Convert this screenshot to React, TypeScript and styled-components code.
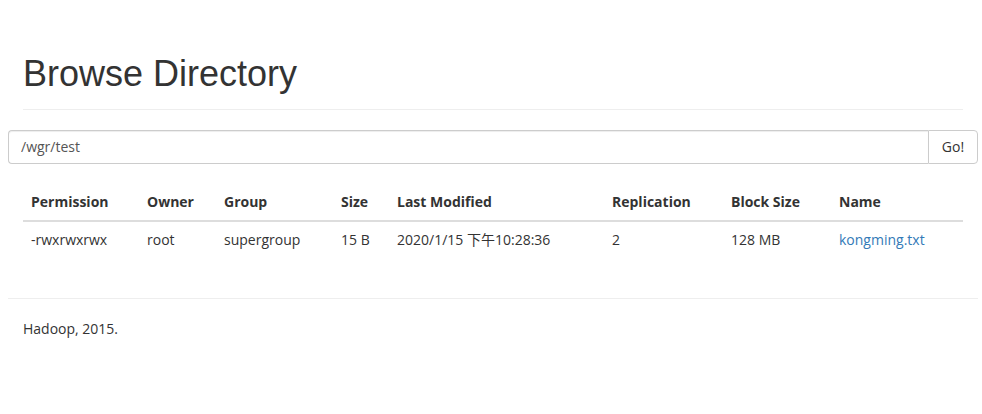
import styled, { createGlobalStyle } from 'styled-components';

const GlobalStyle = createGlobalStyle`
  body {
    margin: 0 4px 0 8px;
    background: #fff;
    color: #333;
    font-family: 'Open Sans', 'Noto Sans CJK SC', sans-serif;
    font-size: 14px;
    line-height: 1.42857;
  }
`;

const columns = [
  { label: 'Permission', width: 116 },
  { label: 'Owner', width: 77 },
  { label: 'Group', width: 117 },
  { label: 'Size', width: 56 },
  { label: 'Last Modified', width: 215 },
  { label: 'Replication', width: 119 },
  { label: 'Block Size', width: 108 },
  { label: 'Name', width: 132 },
];

const files = [
  {
    permission: '-rwxrwxrwx',
    owner: 'root',
    group: 'supergroup',
    size: '15 B',
    modified: '2020/1/15 下午10:28:36',
    replication: '2',
    blockSize: '128 MB',
    name: 'kongming.txt',
  },
];

export default function App() {
  return (
    <>
      <GlobalStyle />
      <Container>
        <PageHeader>
          <Title>Browse Directory</Title>
        </PageHeader>
        <InputGroup>
          <PathInput defaultValue="/wgr/test" />
          <GoButton>Go!</GoButton>
        </InputGroup>
        <Table>
          <thead>
            <tr>
              {columns.map(col => (
                <Th key={col.label} $width={col.width}>{col.label}</Th>
              ))}
            </tr>
          </thead>
          <tbody>
            {files.map(f => (
              <tr key={f.name}>
                <Td>{f.permission}</Td>
                <Td>{f.owner}</Td>
                <Td>{f.group}</Td>
                <Td>{f.size}</Td>
                <Td>{f.modified}</Td>
                <Td>{f.replication}</Td>
                <Td>{f.blockSize}</Td>
                <Td><FileLink href="#">{f.name}</FileLink></Td>
              </tr>
            ))}
          </tbody>
        </Table>
        <Rule />
        <Footer>Hadoop, 2015.</Footer>
      </Container>
    </>
  );
}

const Container = styled.div`
  padding: 0 15px;
`;

const PageHeader = styled.div`
  padding-bottom: 15px;
  margin: 54px 0 20px;
  border-bottom: 1px solid #eee;
`;

const Title = styled.h1`
  margin: 0;
  font-family: 'Liberation Sans', Arial, sans-serif;
  font-size: 36px;
  font-weight: 500;
  line-height: 1.1;
  color: #333;
`;

const InputGroup = styled.div`
  display: flex;
  margin: 0 -15px;
  height: 34px;
`;

const PathInput = styled.input`
  flex: 1;
  min-width: 0;
  height: 34px;
  box-sizing: border-box;
  padding: 6px 12px;
  font-family: inherit;
  font-size: 14px;
  color: #555;
  border: 1px solid #ccc;
  border-right: none;
  border-radius: 4px 0 0 4px;
  box-shadow: inset 0 1px 1px rgba(0, 0, 0, 0.075);
  outline: none;
`;

const GoButton = styled.button`
  width: 50px;
  height: 34px;
  box-sizing: border-box;
  font-family: inherit;
  font-size: 14px;
  color: #333;
  background: #fff;
  border: 1px solid #ccc;
  border-radius: 0 4px 4px 0;
  cursor: pointer;
`;

const Table = styled.table`
  width: 100%;
  margin: 20px 0 20px;
  border-collapse: collapse;
  table-layout: fixed;
`;

const Th = styled.th<{ $width: number }>`
  width: ${p => p.$width - 16}px;
  padding: 8px;
  text-align: left;
  font-weight: 700;
  vertical-align: bottom;
  white-space: nowrap;
  border-bottom: 2px solid #ddd;
`;

const Td = styled.td`
  padding: 8px;
  vertical-align: top;
  white-space: nowrap;
`;

const FileLink = styled.a`
  color: #337ab7;
  text-decoration: none;
`;

const Rule = styled.hr`
  margin: 40px -15px 20px;
  border: 0;
  border-top: 1px solid #eee;
`;

const Footer = styled.p`
  margin: 0;
`;
